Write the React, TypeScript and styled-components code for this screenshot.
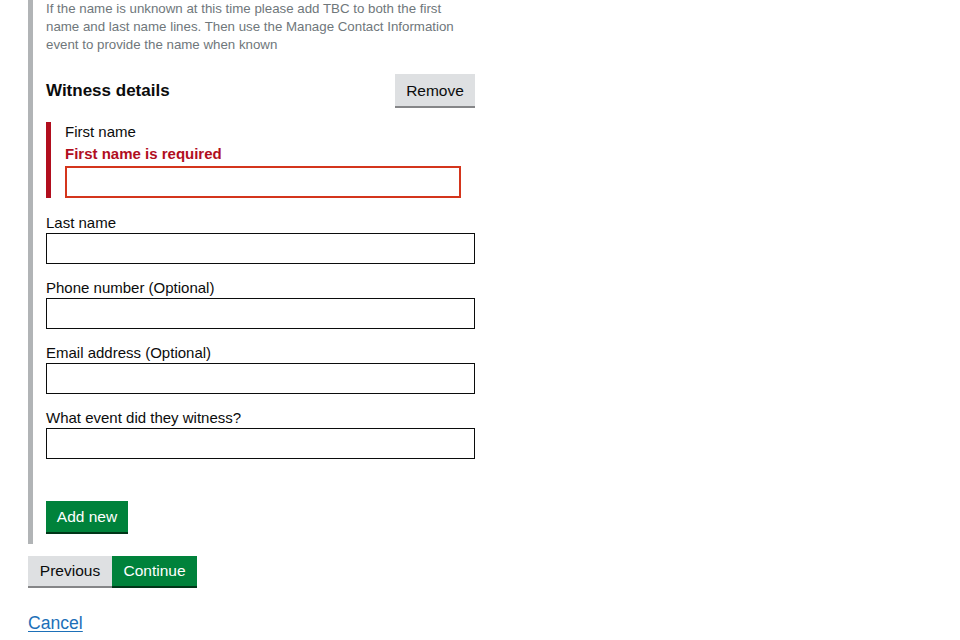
import React from "react";
import styled, { createGlobalStyle } from "styled-components";

const Global = createGlobalStyle`
  html, body { margin: 0; padding: 0; background: #ffffff; }
  body { font-family: "Liberation Sans", Arial, sans-serif; color: #0b0c0c; }
  * { box-sizing: border-box; }
`;

const Page = styled.div`
  padding-left: 28px;
  width: 960px;
  height: 640px;
  overflow: hidden;
`;

const Fieldset = styled.div`
  width: 447px;
  border-left: 5px solid #b1b4b6;
  padding: 0 0 12px 13px;
`;

const Hint = styled.p`
  margin: 0;
  font-size: 13.3px;
  line-height: 18px;
  color: #6f777b;
  width: 425px;
`;

const HeaderRow = styled.div`
  margin-top: 20px;
  display: flex;
  align-items: center;
  justify-content: space-between;
  height: 32px;
`;

const Heading = styled.h2`
  margin: 0;
  font-size: 17px;
  font-weight: 700;
  line-height: 20px;
  padding-top: 1px;
`;

const Button = styled.button<{ $variant?: "primary" | "secondary" }>`
  font-family: "Liberation Sans", Arial, sans-serif;
  font-size: 15.5px;
  line-height: 1;
  white-space: nowrap;
  border: 0;
  border-radius: 0;
  margin: 0;
  padding: 0;
  cursor: pointer;
  background: ${(p) => (p.$variant === "primary" ? "#00823b" : "#dee0e2")};
  color: ${(p) => (p.$variant === "primary" ? "#ffffff" : "#0b0c0c")};
  box-shadow: 0 2px 0 ${(p) => (p.$variant === "primary" ? "#003618" : "#858688")};
`;

const RemoveButton = styled(Button)`
  height: 32px;
  width: 80px;
  padding-top: 2px;
`;

const ErrorGroup = styled.div`
  margin-top: 16px;
  border-left: 5px solid #b10e1e;
  padding-left: 14px;
  display: flex;
  flex-direction: column;
`;

const Label = styled.label`
  display: block;
  font-size: 15px;
  line-height: 20px;
  color: #0b0c0c;
`;

const ErrorMessage = styled.span`
  display: block;
  margin-top: 2px;
  font-size: 15px;
  font-weight: 700;
  line-height: 20px;
  color: #b10e1e;
`;

const Input = styled.input<{ $error?: boolean }>`
  display: block;
  width: ${(p) => (p.$error ? "396px" : "429px")};
  height: ${(p) => (p.$error ? "32px" : "31px")};
  margin: ${(p) => (p.$error ? "2px 0 0 0" : "0")};
  border: ${(p) => (p.$error ? "2px solid #d4351c" : "1px solid #0b0c0c")};
  border-radius: 0;
  padding: 4px;
  font-family: "Liberation Sans", Arial, sans-serif;
  font-size: 15px;
  background: #ffffff;
`;

const Fields = styled.div`
  margin-top: 15px;
  display: flex;
  flex-direction: column;
  gap: 14px;
`;

const Field = styled.div`
  display: flex;
  flex-direction: column;
`;

const AddButton = styled(Button)`
  display: block;
  margin-top: 42px;
  height: 31px;
  width: 82px;
`;

const NavRow = styled.div`
  margin-top: 12px;
  display: flex;
`;

const NavButton = styled(Button)<{ $w: number }>`
  height: 30px;
  width: ${(p) => p.$w}px;
`;

const CancelLink = styled.a`
  display: inline-block;
  margin-top: 26px;
  font-size: 17.6px;
  line-height: 22px;
  color: #1d70b8;
  text-decoration: underline;
  text-underline-offset: 2px;
`;

const fields = [
  "Last name",
  "Phone number (Optional)",
  "Email address (Optional)",
  "What event did they witness?",
];

export default function App() {
  return (
    <Page>
      <Global />
      <Fieldset>
        <Hint>
          If the name is unknown at this time please add TBC to both the first
          name and last name lines. Then use the Manage Contact Information
          event to provide the name when known
        </Hint>
        <HeaderRow>
          <Heading>Witness details</Heading>
          <RemoveButton>Remove</RemoveButton>
        </HeaderRow>
        <ErrorGroup>
          <Label>First name</Label>
          <ErrorMessage>First name is required</ErrorMessage>
          <Input $error />
        </ErrorGroup>
        <Fields>
          {fields.map((f) => (
            <Field key={f}>
              <Label>{f}</Label>
              <Input />
            </Field>
          ))}
        </Fields>
        <AddButton $variant="primary">Add new</AddButton>
      </Fieldset>
      <NavRow>
        <NavButton $w={84}>Previous</NavButton>
        <NavButton $w={85} $variant="primary">
          Continue
        </NavButton>
      </NavRow>
      <div>
        <CancelLink href="#">Cancel</CancelLink>
      </div>
    </Page>
  );
}
